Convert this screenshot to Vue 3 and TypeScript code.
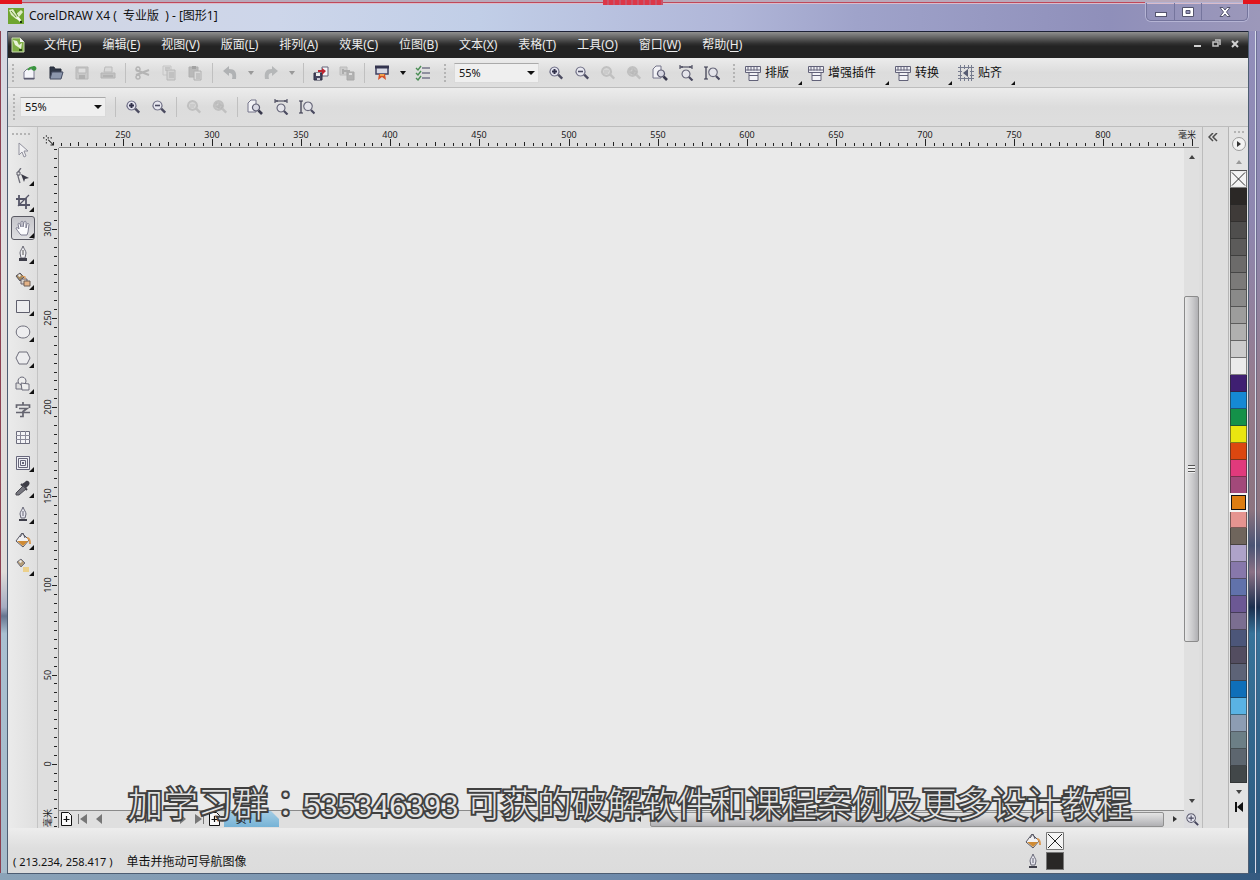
<script setup lang="ts">
import { computed, h, ref, type FunctionalComponent } from 'vue'

type Shape = [d: string, fill: string, stroke?: string, width?: number]

const lens = 'M6.5 2a4.5 4.5 0 1 0 .01 0z'
const handle = 'M10.2 9.7l4 4'
const ink = '#5c5c6e'
const off = '#c0c0c0'

const shapes: Record<string, Shape[]> = {
  logo: [
    ['M0 0h16v16H0z', '#6fa52f'],
    ['M1 2l4-1 3 5 5-4 2 2-4 5 2 3-5-1-5-4z', '#dcebc3'],
    ['M3 3l6 7M7 2l3 7', 'none', '#5c8c28', 1],
    ['M9 8l4 4-1 2-4-4z', '#f5f9ee'],
    ['M12 13h2v2h-2z', '#1e3410'],
  ],
  docLogo: [
    ['M2 1h8l4 4v10H2z', '#7fae45', '#c9d9b2', 1],
    ['M3 3l4 1 2 4 3-2-1 6-6-4z', '#e8f2d8'],
    ['M10 1v4h4', '#f4f4f4'],
    ['M9 12h3v2H9z', '#2c4a15'],
  ],
  newDoc: [
    ['M2 7l3-3h7v10H2z', '#f5f5fa', '#7b7b90', 1],
    ['M2 13.500h10.500', 'none', '#5c5c70', 1.5],
    ['M6 5c2-3 4-3 6-2', 'none', '#3f9a3f', 2],
    ['M12 1a2.4 2.4 0 1 0 .01 0z', '#3a9440'],
  ],
  open: [
    ['M2 2h4l1 2h6v9H2z', '#303848', '#272d3b', 1],
    ['M4 7h11l-2 7H2z', '#8c97ad', '#464e64', 1],
  ],
  save: [
    ['M2 2h12v12H2z', '#c8c8c8', '#b6b6b6', 1],
    ['M4 3h8v5H4z', '#dedede', '#b8b8b8', 1],
    ['M5 10h6v4H5z', '#b0b0b0'],
  ],
  print: [
    ['M5 2h7v5H4z', '#d8d8d8', '#bababa', 1],
    ['M1 8h14v5H1z', '#c2c2c2', '#b4b4b4', 1],
    ['M3 11h10', 'none', '#a2a2a2', 1],
  ],
  cut: [
    ['M1 5l13 5M1 10l13-5', 'none', '#b4b4b4', 2],
    ['M3 2a2 2 0 1 0 .01 0zM3 10a2 2 0 1 0 .01 0z', 'none', '#b4b4b4', 1.5],
  ],
  copy: [
    ['M2 1h8v9H2z', '#dcdcdc', '#c6c6c6', 1],
    ['M6 5h8v10H6z', '#d2d2d2', '#b8b8b8', 1],
    ['M8 8h5M8 10h5M8 12h5M4 3h5M4 5h2', 'none', '#b0b0b0', 1],
  ],
  paste: [
    ['M2 2h9v10H2z', '#b9b9b9', '#b0b0b0', 1],
    ['M5 1h4v3H5z', '#a2a2a2'],
    ['M7 6h7v9H7z', '#d9d9d9', '#b0b0b0', 1],
    ['M9 9h4M9 11h4M9 13h4', 'none', '#aaa', 1],
  ],
  undo: [['M1 6l6-5v3c6 0 8 3 7 10h-4c1-4 0-6-3-6v3z', '#b0b2b4']],
  redo: [['M15 6L9 1v3C3 4 1 7 2 14h4c-1-4 0-6 3-6v3z', '#b5b7b8']],
  importDoc: [
    ['M9 2h6v9H9z', '#f4f4f8', '#67677b', 1],
    ['M1 8h8v7H1z', '#45455e', '#2e2e45', 1],
    ['M3 8h4v3H3z', '#eee'],
    ['M4 13h3v2H4z', '#c9c9d4'],
    ['M5 5h4V3l4 3-4 4V7H5z', '#bc2531'],
  ],
  exportDoc: [
    ['M1 2h7v8H1z', '#cdcdcd', '#bcbcbc', 1],
    ['M8 7h7v8H8z', '#b2b2b2', '#a8a8a8', 1],
    ['M10 8h3v2h-3z', '#ddd'],
    ['M3 6h8M4 4v5', 'none', '#acacac', 2],
  ],
  launcher: [
    ['M2 2h12v7H2z', '#d6d8e4', '#3f4060', 1.5],
    ['M1 2h14', 'none', '#33344e', 3],
    ['M5 9h6l1 6-4-3-4 3z', '#d5542b'],
    ['M6 9h4v2H6z', '#efa14c'],
  ],
  options: [
    ['M1 3l2 2 3-4M1 8l2 2 3-4M1 13l2 2 3-4', 'none', '#4c8f56', 1.4],
    ['M7 3h8M7 8h8M7 13h8', 'none', '#77778a', 1.4],
  ],
  zoomIn: [[lens, '#e4e4ef', '#73738a', 1.2], ['M4 6.5h5M6.5 4v5', 'none', '#30304a', 2], [handle, 'none', '#4b4b60', 2.4]],
  zoomOut: [[lens, '#e8e8f0', '#77778c', 1.2], ['M4 6.5h5', 'none', '#4b4b62', 1.6], [handle, 'none', '#4b4b60', 2.4]],
  zoomSel: [[lens, '#d6d6d6', off, 2], ['M4 6h5M4 8h4', 'none', off, 1], [handle, 'none', off, 2.4]],
  zoomAll: [[lens, '#d0d0d0', off, 2], ['M4 4h4v4H4zM6 6h4v3H6z', 'none', '#b4b4b4', 1], [handle, 'none', off, 2.4]],
  zoomPage: [
    ['M1 4l3-3h5v12H1z', '#f1f1f5', '#75758a', 1],
    ['M9 5a3.5 3.5 0 1 0 .01 0z', '#d8d8e3', '#5b5b70', 1.2],
    ['M11.5 11.5l3.5 3.5', 'none', '#39394d', 2.6],
  ],
  zoomWidth: [
    ['M2 2h12M2 0v4M14 0v4M4 1v2M12 1v2', 'none', '#35354a', 1],
    ['M8 5a4 4 0 1 0 .01 0z', '#e4e4ea', '#6a6a7c', 1.2],
    ['M11 12l3.5 3.5', 'none', '#4a4a60', 2.2],
  ],
  zoomHeight: [
    ['M2 2v12M0 2h4M0 14h4', 'none', '#35354a', 1.2],
    ['M9 3a4.3 4.3 0 1 0 .01 0z', '#e4e4ea', '#6a6a7c', 1.2],
    ['M12 11l3.5 3.5', 'none', '#4a4a60', 2.2],
  ],
  macro: [
    ['M.5 1.5h15v6H.5z', '#eeeef4', '#626279', 1],
    ['M3 1.5v4M6 1.5v4M9 1.5v4M12 1.5v4M1 5h14', 'none', '#626279', 1],
    ['M4 7.5h9v8H4zM4 10.5h9', '#f3f3f7', '#626279', 1],
  ],
  snap: [
    ['M0 2.500h16M0 6.500h4M12 6.500h4M0 10.500h4M12 10.500h4M0 13.500h16', 'none', '#767b8e', 1],
    ['M2.500 0v16M6.500 0v4M6.500 12v4M10.500 0v4M10.500 12v4M13.500 0v16', 'none', '#767b8e', 1],
    ['M10 4v8L5 8z', '#555b72'],
  ],
  pick: [['M4 1v12l3-3 2 5 2-1-2-5h4z', '#f1f1f3', '#92929e', 1]],
  shape: [
    ['M6 0c-5 5-3 9-1 15', 'none', '#6d6d78', 1.3],
    ['M2 4h3v3H2z', '#e8e8e8', '#5b5b68', 1],
    ['M6 6l8 4-4 1-1 3z', '#3a3a46'],
  ],
  crop: [
    ['M4 1v10h11M1 5h10v10', 'none', '#565668', 1.8],
    ['M3 12L14 1', 'none', '#565668', 1.2],
  ],
  hand: [
    [
      'M5 14C3 11 1 9 1 8c1-1 2 0 3 1L3 4c0-1 1.6-1 2 0l1 3V2c0-1 2-1 2 0v5l1-5c.4-1 2-1 2 0v6l1-4c.4-1 2-.6 2 .4L13 12l-1 3H6z',
      '#fbfbfd',
      '#7f7f91',
      1,
    ],
  ],
  pen: [
    ['M8 0c-1 3-3 5-3 7l1 5h4l1-5c0-2-2-4-3-7z', '#eeeef1', '#686874', 1],
    ['M8 4v5', 'none', '#555', 1],
    ['M4 12h8v3H4z', '#3f3f4a'],
  ],
  outline: [
    ['M8 1c-1 3-3 5-3 7l1 4h4l1-4c0-2-2-4-3-7z', '#e6e6ee', '#686878', 1],
    ['M8 5v5', 'none', '#667', 1],
    ['M4 13h8v2H4z', '#3f3f4a'],
  ],
  smartFill: [
    ['M1 4l4-3 4 4-4 4z', '#a78b5f', '#565662', 1],
    ['M3 3l2-1 1 2-2 1z', '#eee'],
    ['M6 7h6v5H6z', '#d9d4cf', '#6b6068', 1],
    ['M9 9h6v5H9z', '#e3b287', '#6d5d53', 1],
    ['M7 4l3 1v2', 'none', '#d9934c', 1.2],
  ],
  rect: [['M1.500 2.500h13v12h-13z', '#ededef', '#5e5e6c', 1]],
  ellipse: [['M8 2c9 0 9 12 0 12S-1 2 8 2z', '#ededef', '#6e6e7b', 1]],
  polygon: [['M4 2h8l3 6-3 6H4L1 8z', '#ededef', '#6e6e7b', 1]],
  basic: [
    ['M1 7h6v6H1z', '#ddd', '#6c6c7a', 1],
    ['M7 1a4 4 0 1 0 .01 0z', '#eee', '#6c6c7a', 1],
    ['M6 7l8 1v6H7z', '#eee', '#6c6c7a', 1],
  ],
  text: [
    ['M8 0v3M1.500 6V3h13v3M4 6.500h8L8 9.500v5H5M1 10.500h14', 'none', '#656570', 1.7],
  ],
  table: [
    ['M1.500 3.500h13v12h-13z', '#f3f3f6', '#6b6b7b', 1],
    ['M1 7.500h14M1 11.500h14M5.500 3v12M10.500 3v12', 'none', '#8a8a99', 1],
  ],
  blend: [
    ['M1.500 2.500h13v13h-13zM3.500 4.500h9v9h-9zM5.500 6.500h5v5h-5z', '#efeff4', '#66667a', 1],
    ['M7 8h2v2H7z', '#66667a'],
  ],
  dropper: [
    ['M10 2c2-3 6 0 4 3l-3 3-4-4z', '#3f3f48'],
    ['M6 4l6 6', 'none', '#3f3f48', 2],
    ['M8 6l3 3-7 6H1v-2z', '#77777f', '#4a4a52', 1],
  ],
  bucket: [
    ['M7 1l7 7-6 7-7-6z', '#f1f1f3', '#565662', 1],
    ['M2 9h11l-5 5z', '#cf8b35'],
    ['M5 5l3-4 2 5', 'none', '#565662', 1],
    ['M12 6c3 0 3 3 3 6', 'none', '#d99a55', 2],
  ],
  interactive: [
    ['M2 4l4-3 4 4-4 4z', '#b39c78', '#70707c', 1],
    ['M4 3l2-1 1 2-2 1z', '#eee'],
    ['M8 9h6v5H8z', '#ecd08a'],
  ],
  addPage: [
    ['M2.500 1.500h7l3 3v10h-10z', '#fafafa', '#111', 1],
    ['M7.500 5v6M4.500 8.500h6', 'none', '#111', 1.2],
  ],
  first: [['M3 3h1v10H3z', '#777'], ['M12 3v10L5 8z', '#777']],
  prev: [['M11 3v10L5 8z', '#777']],
  next: [['M5 3v10l6-5z', '#777']],
  last: [['M12 3h1v10h-1z', '#777'], ['M4 3v10l7-5z', '#777']],
  navigator: [
    ['M7 2a5 5 0 1 0 .01 0z', '#e4e4ef', ink, 1.2],
    ['M7 4v6M4 7h6', 'none', '#44445c', 1.2],
    ['M11 11l4 4', 'none', '#44445c', 2.2],
  ],
  origin: [
    ['M4.500 1v2M4.500 6v2M4.500 10v2M0 4.500h2M6 4.500h2M10 4.500h2', 'none', '#333', 1.4],
    ['M7 7l7 7M14 10v4h-4', 'none', '#222', 1.4],
  ],
}

const Icon: FunctionalComponent<{ name: string }> = (props) =>
  h(
    'svg',
    { viewBox: '0 0 16 16', width: 16, height: 16, 'aria-hidden': 'true' },
    (shapes[props.name] ?? []).map(([d, fill, stroke, width]) =>
      h('path', { d, fill, stroke: stroke ?? 'none', 'stroke-width': width ?? 0 }),
    ),
  )
Icon.props = ['name']

const menus: [string, string][] = [
  ['文件', 'F'], ['编辑', 'E'], ['视图', 'V'], ['版面', 'L'], ['排列', 'A'], ['效果', 'C'],
  ['位图', 'B'], ['文本', 'X'], ['表格', 'T'], ['工具', 'O'], ['窗口', 'W'], ['帮助', 'H'],
]

const fileTools = [['newDoc', '新建'], ['open', '打开'], ['save', '保存'], ['print', '打印']]
const editTools = [['cut', '剪切'], ['copy', '复制'], ['paste', '粘贴']]
const zoomTools = [['zoomIn', '放大'], ['zoomOut', '缩小']]
const zoomOffTools = [['zoomSel', '缩放选定范围'], ['zoomAll', '缩放全部对象']]
const zoomPageTools = [['zoomPage', '显示页面'], ['zoomWidth', '按页宽显示'], ['zoomHeight', '按页高显示']]
const allZoomTools = [...zoomTools, ...zoomOffTools, ...zoomPageTools]
const macros = [['macro', '排版'], ['macro', '增强插件'], ['macro', '转换'], ['snap', '贴齐']]

const toolbox: [string, string, boolean][] = [
  ['pick', '挑选', false], ['shape', '形状', true], ['crop', '裁剪', true], ['hand', '手形', true],
  ['pen', '钢笔', true], ['smartFill', '智能填充', true], ['rect', '矩形', true], ['ellipse', '椭圆形', true],
  ['polygon', '多边形', true], ['basic', '基本形状', true], ['text', '文本', false], ['table', '表格', false],
  ['blend', '调和', true], ['dropper', '滴管', true], ['outline', '轮廓', true], ['bucket', '填充', true],
  ['interactive', '交互式填充', true],
]
const activeTool = ref('手形')

const swatches = [
  '#2b2826', '#3f3b39', '#4f4e4d', '#5c5b5a', '#6c6b6a', '#7b7a79', '#8a8a89', '#9d9d9c', '#b0b0af',
  '#cccccc', '#ebebeb', '#3f1f72', '#1589d4', '#149149', '#e9e610', '#dc4710', '#e03a7c', '#a2497a',
  '#dc7d12', '#e59490', '#6f655c', '#aea3c9', '#8778ab', '#6172ab', '#6c5894', '#7b6e91', '#4c5679',
  '#534d60', '#5d6377', '#0f6fb9', '#5ab3e4', '#8d9db3', '#6c7f86', '#5d666f', '#424749',
]
const activeSwatch = ref(18)

const zoom = ref('55%')
const zoomLevels = ['25%', '55%', '100%', '200%']

interface Tick { at: number; kind: 'major' | 'mid' | 'minor'; label: string }
const STEP = 8.91
function ticks(origin: number, first: number, count: number, start: number, direction: number, last: number): Tick[] {
  return Array.from({ length: count }, (_, i) => {
    const k = i + first
    const value = start + direction * k * 5
    const major = k % 10 === 0
    return {
      at: Math.round(origin + k * STEP),
      kind: major ? 'major' : k % 5 === 0 ? 'mid' : 'minor',
      label: major && value * direction <= last ? String(value) : '',
    }
  })
}
const hTicks = computed(() => ticks(64, -7, 300, 250, 1, 800))
const vTicks = computed(() => ticks(81, -9, 160, 300, -1, 0))
const hLength = { major: 7, mid: 4, minor: 3 }
const vLength = { major: 5, mid: 3, minor: 3 }
</script>

<template>
  <div class="desktop">
    <header class="titlebar">
      <i class="mark mark-left"></i>
      <i class="mark mark-mid"></i>
      <i class="mark mark-right"></i>
      <Icon name="logo" />
      <h1>CorelDRAW X4 (&nbsp; 专业版 &nbsp;) - [图形1]</h1>
      <div class="win-controls">
        <button type="button" aria-label="最小化">
          <svg width="12" height="12"><rect x=".5" y="6.500" width="11" height="4" fill="#fff" stroke="#55556f" /></svg>
        </button>
        <button type="button" aria-label="最大化">
          <svg width="12" height="12"><path d="M.5 1.500h11v9H.5zM4 4.500v3h4v-3z" fill="#fff" fill-rule="evenodd" stroke="#55556f" /></svg>
        </button>
        <button type="button" class="wide" aria-label="关闭">
          <svg width="12" height="12"><path d="M1 1.500h3l2 2.500 2-2.500h3L7.500 6l3.500 4.500H8L6 8l-2 2.500H1L4.500 6z" fill="#fff" stroke="#55556f" /></svg>
        </button>
      </div>
    </header>

    <div class="client">
      <nav class="menubar" aria-label="菜单">
        <Icon name="docLogo" class="doc-icon" />
        <button v-for="[name, key] in menus" :key="key" type="button">{{ name }}(<u>{{ key }}</u>)</button>
        <div class="mdi">
          <button type="button" aria-label="最小化文档"><svg width="9" height="9"><path d="M1 7h7" stroke="#d2d2d2" stroke-width="2" /></svg></button>
          <button type="button" aria-label="还原文档"><svg width="9" height="9"><path d="M1 3h5v4H1zM3 1h5v5" fill="none" stroke="#c4c4c4" stroke-width="1.500" /></svg></button>
          <button type="button" aria-label="关闭文档"><svg width="9" height="9"><path d="M1 2l6 6M7 2L1 8" stroke="#d2d2d2" stroke-width="2" /></svg></button>
        </div>
      </nav>

      <div class="bar standard" role="toolbar" aria-label="标准">
        <i class="grip"></i>
        <button v-for="[icon, label] in fileTools" :key="icon" type="button" class="tool" :aria-label="label"><Icon :name="icon" /></button>
        <i class="sep"></i>
        <button v-for="[icon, label] in editTools" :key="icon" type="button" class="tool" :aria-label="label"><Icon :name="icon" /></button>
        <i class="sep"></i>
        <button type="button" class="tool" aria-label="撤消"><Icon name="undo" /></button>
        <button type="button" class="drop pale" aria-label="撤消列表"></button>
        <button type="button" class="tool" aria-label="重做"><Icon name="redo" /></button>
        <button type="button" class="drop pale" aria-label="重做列表"></button>
        <i class="sep"></i>
        <button type="button" class="tool" aria-label="导入"><Icon name="importDoc" /></button>
        <button type="button" class="tool" aria-label="导出"><Icon name="exportDoc" /></button>
        <i class="sep"></i>
        <button type="button" class="tool" aria-label="应用程序启动器"><Icon name="launcher" /></button>
        <button type="button" class="drop" aria-label="启动器列表"></button>
        <button type="button" class="tool" aria-label="选项"><Icon name="options" /></button>
        <i class="grip inner"></i>
        <label class="combo">
          <select v-model="zoom" aria-label="缩放级别"><option v-for="z in zoomLevels" :key="z">{{ z }}</option></select>
        </label>
        <button v-for="[icon, label] in allZoomTools" :key="icon" type="button" class="tool" :aria-label="label"><Icon :name="icon" /></button>
        <i class="grip inner"></i>
        <button v-for="[icon, label] in macros" :key="label" type="button" class="macro"><Icon :name="icon" />{{ label }}</button>
      </div>

      <div class="bar property" role="toolbar" aria-label="属性">
        <i class="grip"></i>
        <label class="combo">
          <select v-model="zoom" aria-label="显示比例"><option v-for="z in zoomLevels" :key="z">{{ z }}</option></select>
        </label>
        <i class="sep"></i>
        <button v-for="[icon, label] in zoomTools" :key="icon" type="button" class="tool" :aria-label="label"><Icon :name="icon" /></button>
        <i class="sep"></i>
        <button v-for="[icon, label] in zoomOffTools" :key="icon" type="button" class="tool" :aria-label="label"><Icon :name="icon" /></button>
        <i class="sep"></i>
        <button v-for="[icon, label] in zoomPageTools" :key="icon" type="button" class="tool" :aria-label="label"><Icon :name="icon" /></button>
      </div>

      <div class="body">
        <aside class="toolbox" role="toolbar" aria-label="工具箱">
          <i class="dots"></i>
          <button
            v-for="[icon, label, flyout] in toolbox"
            :key="label"
            type="button"
            :class="{ active: activeTool === label, flyout }"
            :aria-label="label"
            @click="activeTool = label"
          >
            <Icon :name="icon" />
          </button>
        </aside>

        <main class="workspace">
          <div class="corner"><Icon name="origin" /></div>
          <svg class="h-ruler" aria-hidden="true">
            <g v-for="t in hTicks" :key="t.at">
              <rect :x="t.at" :y="19 - hLength[t.kind]" width="1" :height="hLength[t.kind]" />
              <text v-if="t.label" :x="t.at" y="11">{{ t.label }}</text>
            </g>
            <svg x="100%" overflow="visible"><text x="-12" y="11">毫米</text></svg>
          </svg>
          <svg class="v-ruler" aria-hidden="true">
            <g v-for="t in vTicks" :key="t.at">
              <rect :x="19 - vLength[t.kind]" :y="t.at" :width="vLength[t.kind]" height="1" />
              <text v-if="t.label" :transform="`translate(13 ${t.at}) rotate(-90)`">{{ t.label }}</text>
            </g>
            <svg y="100%" overflow="visible"><text transform="translate(13 -10) rotate(-90)">毫米</text></svg>
          </svg>
          <div class="canvas"></div>
          <div class="v-scroll">
            <i class="arrow up"></i>
            <div class="track"><i class="thumb"><b></b></i></div>
            <i class="arrow down"></i>
          </div>
          <div class="pages">
            <button type="button" aria-label="在前添加页"><Icon name="addPage" /></button>
            <button type="button" aria-label="首页"><Icon name="first" /></button>
            <button type="button" aria-label="上一页"><Icon name="prev" /></button>
            <span class="count">1 / 1</span>
            <button type="button" aria-label="下一页"><Icon name="next" /></button>
            <button type="button" aria-label="末页"><Icon name="last" /></button>
            <button type="button" aria-label="在后添加页"><Icon name="addPage" /></button>
            <button type="button" class="tab">页1</button>
            <div class="h-scroll">
              <i class="arrow left"></i>
              <div class="h-thumb"></div>
              <i class="arrow right"></i>
            </div>
          </div>
          <button type="button" class="nav" aria-label="导航器"><Icon name="navigator" /></button>
          <p class="caption">加学习群：<span>535346393 </span>可获的破解软件和课程案例及更多设计教程</p>
        </main>

        <aside class="docker">
          <button type="button" aria-label="展开泊坞窗">
            <svg width="10" height="9"><path d="M5 0L1 4l4 4M9 0L5 4l4 4" fill="none" stroke="#4c4c4c" stroke-width="1.500" /></svg>
          </button>
        </aside>

        <aside class="palette" aria-label="调色板">
          <i class="dots"></i>
          <button type="button" class="round" aria-label="调色板菜单"><i class="arrow right"></i></button>
          <i class="arrow up soft"></i>
          <div class="colors">
            <button type="button" class="swatch" aria-label="无颜色">
              <svg viewBox="0 0 16 16"><path d="M0 0h16v16H0z" fill="#f4f4f4" /><path d="M1 1l14 14M15 1L1 15" stroke="#222" /></svg>
            </button>
            <button
              v-for="(c, i) in swatches"
              :key="c"
              type="button"
              class="swatch"
              :class="{ chosen: i === activeSwatch }"
              :style="{ backgroundColor: c }"
              :aria-label="c"
              @click="activeSwatch = i"
            ></button>
          </div>
          <i class="arrow down"></i>
          <button type="button" class="end" aria-label="展开调色板">
            <svg width="8" height="10"><path d="M0 0h2v10H0zM8 0v10L2 5z" fill="#111" /></svg>
          </button>
        </aside>
      </div>

      <footer class="status">
        <div class="messages">
          <span class="coords">( 213.234, 258.417 )</span>
          <span>单击并拖动可导航图像</span>
        </div>
        <div class="fills">
          <Icon name="bucket" />
          <svg width="18" height="18"><path d="M.5.500h17v17H.5z" fill="#f4f4f4" stroke="#777" /><path d="M2 2l14 14M16 2L2 16" stroke="#222" /></svg>
          <Icon name="outline" />
          <i class="ink"></i>
        </div>
      </footer>
    </div>
  </div>
</template>

<style>
body {
  margin: 0;
}
</style>

<style scoped>
* {
  box-sizing: border-box;
}

.desktop {
  min-height: 100vh;
  display: flex;
  flex-direction: column;
  font-family: 'Noto Sans', 'Noto Sans CJK SC', sans-serif;
  font-size: 12px;
  line-height: 16px;
  color: #111;
  background:
    linear-gradient(90deg, #8ba3b8, #6d89aa 50%, #355a80) bottom / 100% 7px no-repeat,
    linear-gradient(90deg, transparent 7px, #d7dcea 7px, #d7dcea 8px, #4b5370 8px, transparent 9px) right / 12px 100% no-repeat,
    linear-gradient(90deg, #8d4050 1px, transparent 1px) left / 8px 100% no-repeat,
    linear-gradient(#9290bd, #8e87b0 25%, #957b8c 45%, #8c7480 58%, #4a5475 62%, #8b7186 65%, #1b2f4f 69%, #37739a 72%, #2c577d) right / 12px 100% no-repeat,
    linear-gradient(#d2d5e2, #e2dfdf 30%, #dfdcd9 65%, #a6adc2 69%, #66758f 70%, #a9c0d1 72%, #a5bac9) left / 8px 100% no-repeat;
}

button {
  padding: 0;
  border: 0;
  background: none;
  font: inherit;
  color: inherit;
  display: flex;
  align-items: center;
  justify-content: center;
  flex-shrink: 0;
}

svg {
  flex-shrink: 0;
}

/* Title bar */
.titlebar {
  position: relative;
  height: 31px;
  display: flex;
  align-items: center;
  gap: 5px;
  padding: 0 12px 2px 8px;
  border-top: 2px solid #b9a9ba;
  background: linear-gradient(90deg, #d2d6e3, #cdd6ea 22%, #c1cee7 38%, #b0b6d8 58%, #9fa3ca 68%, #8f8fba 88%, #9c98ba);
  box-shadow: inset 0 1px #c0485a, inset 0 2px #d9bccb;
}

.titlebar h1 {
  margin: 0;
  flex: 1;
  font-size: 12px;
  font-weight: 400;
}

.mark {
  position: absolute;
  top: -2px;
  height: 3px;
  background: #e3141c;
}

.mark-left {
  left: 0;
  width: 22px;
  height: 4px;
}

.mark-mid {
  left: 603px;
  width: 60px;
  height: 5px;
  background: repeating-linear-gradient(90deg, #dc3748 0 4px, #c9526a 4px 6px);
}

.mark-right {
  right: 0;
  width: 17px;
  height: 4px;
}

.win-controls {
  align-self: flex-start;
  display: flex;
  height: 18px;
  margin-top: 1px;
  border: 1px solid #74749c;
  border-top: 0;
  border-radius: 0 0 5px 5px;
  box-shadow: 0 0 0 1px #b5b4d4;
}

.win-controls button {
  width: 27px;
}

.win-controls button + button {
  border-left: 1px solid #75759d;
}

.win-controls .wide {
  width: 46px;
}

.client {
  flex: 1;
  display: flex;
  flex-direction: column;
  margin: 0 12px 7px 8px;
  background: #dedede;
  box-shadow: 0 0 0 1px #4d5d72;
}

/* Menu bar */
.menubar {
  display: flex;
  align-items: center;
  height: 27px;
  border-top: 1px solid #1e2236;
  background: linear-gradient(#8f8f8f, #5b5b5b 25%, #303030 45%, #232323 55%);
  color: #ececec;
}

.doc-icon {
  margin: 0 7px 0 2px;
}

.menubar > button {
  padding: 0 10px;
  margin-left: 1px;
  height: 24px;
}

.menubar u {
  text-underline-offset: 2px;
}

.mdi {
  margin-left: auto;
  margin-right: 3px;
  margin-bottom: 4px;
  display: flex;
}

.mdi button {
  width: 19px;
  height: 20px;
}

/* Toolbars */
.bar {
  display: flex;
  align-items: center;
  border-bottom: 1px solid #bdbdbd;
  background: linear-gradient(#ececec, #dcdcdc 50%, #dedede);
}

.standard {
  height: 30px;
}

.property {
  height: 39px;
}

.grip {
  width: 9px;
  height: 20px;
  flex-shrink: 0;
  background: radial-gradient(circle, #b4b4b4 1px, transparent 1px) center / 4px 4px repeat-y;
}

.grip.inner {
  width: 18px;
}

.property .grip {
  width: 12px;
  height: 26px;
}

.tool {
  width: 26px;
  height: 24px;
}

.sep {
  width: 1px;
  height: 20px;
  margin: 0 4px;
  flex-shrink: 0;
  background: #c0c0c0;
}

.property .combo + .sep {
  margin: 0 4px 0 9px;
}

.drop {
  width: 15px;
  height: 24px;
}

.drop::after,
.combo::after {
  content: '';
  border: 3px solid transparent;
  border-top: 4px solid #111;
  border-bottom: 0;
}

.drop.pale::after {
  border-top-color: #999;
}

.combo {
  position: relative;
  width: 86px;
  height: 20px;
  flex-shrink: 0;
}

.standard .combo {
  width: 85px;
  margin: 0 4px 0 0;
}

.combo::after {
  position: absolute;
  right: 4px;
  top: 8px;
  border-width: 4px 4px 0;
  pointer-events: none;
}

.combo select {
  appearance: none;
  width: 100%;
  height: 100%;
  padding: 0 4px;
  border: 1px solid #dadada;
  border-top-color: #aaa;
  border-radius: 0;
  background: #efefef;
  color: #111;
  font: inherit;
  font-size: 11px;
}

.macro {
  position: relative;
  gap: 4px;
  height: 28px;
  padding: 0 17px 0 2px;
}

.macro::after,
.flyout::after {
  content: '';
  position: absolute;
  right: 4px;
  bottom: 2px;
  border: solid transparent;
  border-width: 0 0 4px 4px;
  border-bottom-color: #111;
}

/* Body */
.body {
  flex: 1;
  display: flex;
}

.toolbox {
  width: 30px;
  padding: 5px 2px 0 3px;
  display: flex;
  flex-direction: column;
  gap: 2px;
  flex-shrink: 0;
  border-right: 1px solid #c4c4c4;
  background: linear-gradient(90deg, #ebebeb, #dfdfdf);
}

.dots {
  height: 4px;
  background: radial-gradient(circle, #b4b4b4 1px, transparent 1px) center / 4px 4px repeat-x;
}

.toolbox .dots {
  width: 20px;
}

.toolbox button {
  position: relative;
  width: 24px;
  height: 24px;
  border-radius: 3px;
}

.toolbox .flyout::after {
  right: 1px;
  bottom: 2px;
  border-width: 0 0 5px 5px;
}

.toolbox .active {
  border: 1px solid #595963;
  background: linear-gradient(#c5c5ca, #dfdfe2);
}

.toolbox .active::after {
  right: 0;
  bottom: 1px;
}

.workspace {
  position: relative;
  flex: 1;
  min-width: 0;
  display: grid;
  grid-template-columns: 21px minmax(0, 1fr) 15px;
  grid-template-rows: 21px minmax(0, 1fr) 18px;
  padding-right: 3px;
}

.corner {
  display: flex;
  align-items: flex-end;
  justify-content: center;
}

.corner svg {
  width: 12px;
  height: 15px;
}

.h-ruler,
.v-ruler {
  width: 100%;
  height: 100%;
  overflow: hidden;
  fill: #222;
  font-size: 9px;
  text-anchor: middle;
}

.h-ruler {
  grid-column: 2 / 4;
  border-bottom: 1px solid #8a8a8a;
}

.v-ruler {
  grid-row: 2 / 4;
  border-right: 1px solid #8a8a8a;
}

.canvas {
  background: #eaeaea;
}

.v-scroll {
  display: flex;
  flex-direction: column;
  align-items: center;
  justify-content: space-between;
  padding: 7px 0;
  background: #e0e0e0;
}

.track {
  flex: 1;
  width: 100%;
  display: grid;
  grid-template-rows: 214fr 540fr 246fr;
}

.thumb {
  grid-row: 2;
  display: grid;
  place-items: center;
  border: 1px solid #8b8b8b;
  border-radius: 2px;
  background: linear-gradient(90deg, #e8e8e8, #c9c9cb 60%, #b0b0b3);
}

.thumb b {
  width: 7px;
  height: 8px;
  background: repeating-linear-gradient(#555 0 1px, #eee 1px 3px);
}

.arrow {
  width: 0;
  height: 0;
  border: 0 solid transparent;
  flex-shrink: 0;
}

.up {
  border-width: 0 3px 4px;
  border-bottom-color: #444;
}

.down {
  border-width: 4px 3px 0;
  border-top-color: #444;
}

.left {
  border-width: 3px 4px 3px 0;
  border-right-color: #333;
}

.right {
  border-width: 3px 0 3px 4px;
  border-left-color: #333;
}

.soft {
  border-bottom-color: #999;
}

.pages {
  display: flex;
  align-items: flex-start;
  border-top: 1px solid #8a8a8a;
  background: #dfdfdf;
}

.pages > button {
  width: 16px;
  height: 16px;
}

.count {
  width: 61px;
  padding: 0 12px;
  font-size: 11px;
  margin-left: 7px;
}

.pages .tab {
  width: 55px;
  font-size: 11px;
  padding-right: 14px;
  margin-left: 1px;
  background: linear-gradient(#a4cce4, #76b3d6);
  clip-path: polygon(0 0, 47px 0, 100% 8px, 100% 100%, 0 100%);
}

.h-scroll {
  width: 49%;
  height: 16px;
  margin-left: auto;
  display: flex;
  align-items: center;
  gap: 9px;
  padding: 0 7px 0 4px;
}

.h-thumb {
  flex: 1;
  height: 15px;
  border: 1px solid #909090;
  border-radius: 2px;
  background: linear-gradient(#e4e4e4, #c8c8ca 55%, #b0b0b3);
}

.nav {
  background: #dcdcdf;
}

.nav svg {
  width: 14px;
  height: 14px;
}

.caption {
  position: absolute;
  left: 90px;
  bottom: 1px;
  margin: 0;
  white-space: nowrap;
  font-family: 'Noto Sans CJK TC', 'Noto Sans CJK SC', sans-serif;
  font-size: 35px;
  font-weight: 300;
  line-height: 40px;
  color: #e4e4e4;
  -webkit-text-stroke: 4px #404040;
  paint-order: stroke fill;
  pointer-events: none;
}

.caption span {
  font-family: 'Liberation Sans', sans-serif;
  font-size: 31px;
}

.docker {
  width: 26px;
  flex-shrink: 0;
  padding-top: 5px;
  border-left: 1px solid #bcbcbc;
}

.docker button {
  width: 20px;
  height: 10px;
}

.palette {
  width: 20px;
  flex-shrink: 0;
  display: flex;
  flex-direction: column;
  align-items: center;
  padding-top: 3px;
  border-left: 1px solid #b5b5b5;
  background: #e3e3e3;
}

.palette .dots {
  width: 12px;
}

.round {
  width: 14px;
  height: 14px;
  margin: 3px 0 9px;
  border: 1px solid #9c9c9c;
  border-radius: 50%;
  background: #f2f2f2;
}

.colors {
  margin: 6px 0 7px;
  border-top: 1px solid #555;
}

.swatch {
  width: 17px;
  height: 17px;
  border: solid rgb(40 40 40 / 55%);
  border-width: 0 1px 1px;
}

.swatch svg {
  width: 15px;
  height: 16px;
}

.swatch.chosen {
  border: 1px solid #111;
  outline: 2px solid #f4f4f4;
  outline-offset: -1px;
  box-shadow: inset 0 0 0 1px #111;
}

.end {
  width: 16px;
  height: 12px;
  margin-top: 7px;
}

/* Status bar */
.status {
  display: flex;
  height: 45px;
  background: linear-gradient(#ededed, #dedede 45%, #dcdcdc);
}

.messages {
  flex: 1;
  display: flex;
  align-items: center;
  gap: 14px;
  padding: 22px 0 0 5px;
}

.coords {
  font-size: 11px;
}

.fills {
  display: grid;
  grid-template-columns: 16px 18px;
  grid-auto-rows: 18px;
  gap: 2px 5px;
  align-content: start;
  align-items: center;
  padding: 4px 0 0;
  margin-right: 184px;
}

.ink {
  width: 18px;
  height: 18px;
  border: 1px solid #777;
  background: #292726;
}
</style>
